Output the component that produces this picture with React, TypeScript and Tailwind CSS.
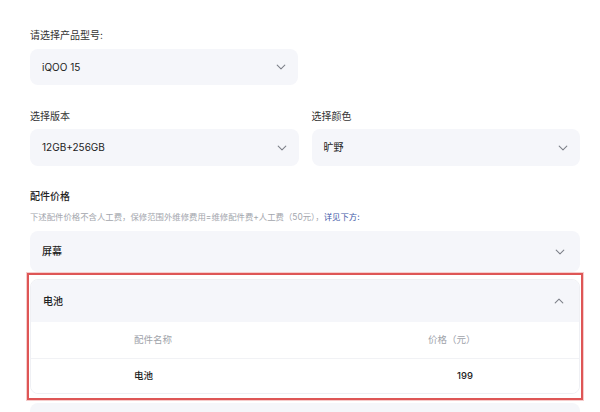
import React from "react";

const font = { fontFamily: 'Inter, "Noto Sans CJK SC", sans-serif' };

function Chevron({ up = false }: { up?: boolean }) {
  return (
    <svg width="10" height="10" viewBox="0 0 10 10" className="text-[#7d8089]">
      <path
        d={up ? "M1.2 6.8 L5 3.2 L8.8 6.8" : "M1.2 3.2 L5 6.8 L8.8 3.2"}
        fill="none"
        stroke="currentColor"
        strokeWidth="1.1"
        strokeLinecap="round"
        strokeLinejoin="round"
      />
    </svg>
  );
}

function Select({ value, className = "" }: { value: string; className?: string }) {
  return (
    <div
      className={`flex items-center justify-between rounded-lg bg-[#f5f6fa] pl-3 pr-[12px] text-[10px] text-[#222] ${className}`}
    >
      <span>{value}</span>
      <Chevron />
    </div>
  );
}

export default function App() {
  return (
    <div className="h-[412px] w-[600px] overflow-hidden bg-white" style={font}>
      <div className="ml-[30px] w-[550px] pt-[28px]">
        {/* 型号 */}
        <div className="text-[10px] leading-[14px] text-[#333]">请选择产品型号:</div>
        <Select value="iQOO 15" className="mt-[7px] h-[36px] w-[268px]" />

        {/* 版本 + 颜色 */}
        <div className="mt-[24px] grid grid-cols-2 gap-x-[13px]">
          <div>
            <div className="text-[10px] leading-[14px] text-[#333]">选择版本</div>
            <Select value="12GB+256GB" className="mt-[6px] h-[37px]" />
          </div>
          <div>
            <div className="text-[10px] leading-[14px] text-[#333]">选择颜色</div>
            <Select value="旷野" className="mt-[6px] h-[37px]" />
          </div>
        </div>

        {/* 配件价格 */}
        <div className="mt-[23px] text-[10px] font-medium leading-[14px] text-[#222]">配件价格</div>
        <div className="mt-[8px] text-[8.4px] leading-[12px] text-[#a3a6ad]">
          下述配件价格不含人工费，保修范围外维修费用=维修配件费+人工费（50元），
          <span className="text-[#3f5aa8]">详见下方:</span>
        </div>

        <div className="mt-[8px] flex flex-col gap-[7px]">
          <div className="flex h-[41px] items-center justify-between rounded-lg bg-[#f5f6fa] pl-3 pr-[15px]">
            <span className="text-[10px] font-medium text-[#222]">屏幕</span>
            <Chevron />
          </div>

          <div className="relative">
            <div className="overflow-hidden rounded-lg border border-[#eff0f4]">
              <div className="flex h-[42px] items-center justify-between bg-[#f5f6fa] pl-3 pr-[15px]">
                <span className="text-[10px] font-medium text-[#222]">电池</span>
                <Chevron up />
              </div>
              <div className="flex h-[37px] items-center border-b border-[#f1f2f5] bg-white text-[9.5px] text-[#a0a3aa]">
                <span className="pl-[103px]">配件名称</span>
                <span className="ml-[256px]">价格（元）</span>
              </div>
              <div className="flex h-[34px] items-center bg-white text-[9.5px] font-medium text-[#222]">
                <span className="pl-[103px]">电池</span>
                <span className="ml-[304px]">199</span>
              </div>
            </div>
            <div className="pointer-events-none absolute -bottom-[6px] -left-[3px] -right-[3px] -top-[6px] border-2 border-[#de5656] shadow-[0_0_0_1px_rgba(222,86,86,0.3)]" />
          </div>

          <div className="mt-[2px] h-[30px] rounded-t-lg bg-[#f5f6fa]" />
        </div>
      </div>
    </div>
  );
}
